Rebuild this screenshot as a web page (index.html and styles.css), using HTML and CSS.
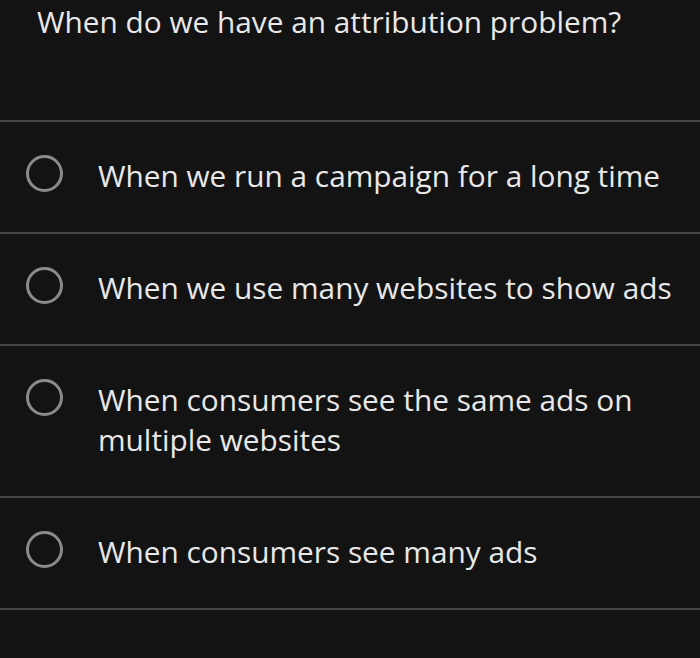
FILE: index.html
```html
<!DOCTYPE html>
<html lang="en">
<head>
    <meta charset="UTF-8">
    <meta name="viewport" content="width=device-width, initial-scale=1.0">
    <title>Quiz</title>
    <link rel="stylesheet" href="styles.css">
</head>
<body>

<!-- Question -->
<div class="question">When do we have an attribution problem?</div>

<!-- Answer options -->
<div class="options">
    <div class="option">
        <span class="radio"></span>
        <span class="label">When we run a campaign for a long time</span>
    </div>
    <div class="option">
        <span class="radio"></span>
        <span class="label">When we use many websites to show ads</span>
    </div>
    <div class="option">
        <span class="radio"></span>
        <span class="label">When consumers see the same ads on multiple websites</span>
    </div>
    <div class="option">
        <span class="radio"></span>
        <span class="label">When consumers see many ads</span>
    </div>
</div>

</body>
</html>
```

FILE: styles.css
```css
body {
    font-family: 'Open Sans', sans-serif;
    margin: 0;
    padding: 0;
    background-color: #131313;
    color: #e8e8e8;
    height: 100vh;
    overflow: hidden;
}

.question {
    font-size: 29.8px;
    line-height: 40px;
    padding: 2px 0 0 37px;
    height: 118px;
}

.options {
    border-top: 2px solid #454545;
}

.option {
    display: flex;
    align-items: flex-start;
    padding: 34px 20px 36px 26px;
    border-bottom: 2px solid #454545;
}

.radio {
    flex: none;
    width: 31px;
    height: 31px;
    margin-top: -1px;
    margin-right: 35px;
    border: 3px solid #8a8a8a;
    border-radius: 50%;
}

.label {
    font-size: 29.8px;
    line-height: 40px;
}
```
